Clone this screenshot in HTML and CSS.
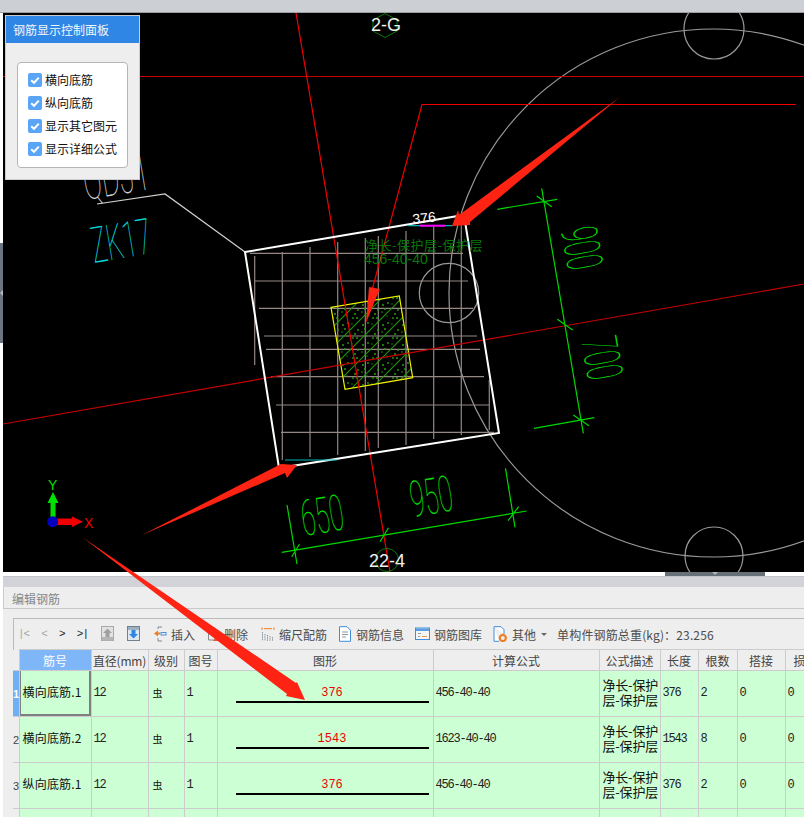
FILE: index.html
```html
<!DOCTYPE html>
<html lang="zh-CN">
<head>
<meta charset="utf-8">
<title>编辑钢筋</title>
<link rel="stylesheet" href="styles.css">
</head>
<body>
<div class="page">
  <div class="topbar"></div>
  <div class="work">
    <div class="side"><div class="side-handle"></div></div>
    <main class="canvas">
      <svg class="cad" width="801" height="559" viewBox="3 13 801 559" xmlns="http://www.w3.org/2000/svg">
        <defs>
          <pattern id="hatch" width="20" height="20" patternUnits="userSpaceOnUse">
            <path class="hatch-line" d="M-2 22L22 -2M-2 2L2 -2M18 22L22 18"/>
            <circle class="hatch-dot" cx="3" cy="5" r="1"/><circle class="hatch-dot" cx="8" cy="3" r=".9"/>
            <circle class="hatch-dot" cx="5" cy="9" r="1"/><circle class="hatch-dot" cx="2" cy="12" r=".8"/>
            <circle class="hatch-dot" cx="15" cy="14" r="1"/><circle class="hatch-dot" cx="18" cy="10" r=".9"/>
            <circle class="hatch-dot" cx="13" cy="18" r=".9"/><circle class="hatch-dot" cx="17" cy="18" r="1"/>
            <circle class="hatch-dot" cx="12" cy="4" r=".7"/><circle class="hatch-dot" cx="7" cy="16" r=".7"/>
          </pattern>
        </defs>
        <g class="l-gray">
          <circle cx="713" cy="293" r="264"/>
          <circle cx="714" cy="29" r="30"/>
          <circle cx="449" cy="293" r="29.7"/>
          <circle cx="714" cy="556" r="29"/>
        </g>
        <path class="l-white-thin" d="M97 204L165 194L245 252"/>
        <path class="l-rebar" d="M250 253.300H463M255 281H468M259 308.300H473M264 336H477M266 349.300H480M271 376.700H484M276 405H489M281 432.300H494"/>
        <path class="l-rebar" d="M254.700 256V365M282.300 252V460M310 247V457M337.700 242V455M365.300 238V451M378.300 236V448M406 231V445M433.700 226V439M461.300 222V435M489.300 380V430"/>
        <polygon class="column-fill" points="331,307.3 399.300,296 412.700,377.700 345,389.300"/>
        <polygon class="column-edge" points="331,307.3 399.300,296 412.700,377.700 345,389.300"/>
        <path class="l-darkred" d="M3 76.500H804M3 424L804 284"/>
        <path class="l-red" d="M796 104.500H422L368 305M296 13L390 572"/>
        <polygon class="outline" points="245,252 464,215 499,433 279,468"/>
        <path class="l-cyan" d="M408 225.700H453M285 460H337"/>
        <path class="l-magenta" d="M420 225.700H445"/>
        <path class="l-green" d="M497.300 209.300L557.300 199.300M541.700 188.300L583.300 433.300M536.700 196L551.700 206.700M557.300 319.300L572.700 330M573.300 415L589 425.700M534 428.300L594.300 417.700"/>
        <path class="l-green" d="M287 505L297 564M281.800 552.300L526.700 511M291.700 556.700L299.500 544M380 541.700L388.500 527.700M508 520.700L518.600 506.700M505.500 468.300L515 527.300"/>
        <polygon class="l-hex" points="385,13.500 397,20 397,31 385,37.500 373,31 373,20"/>
        <circle class="l-hex" cx="387" cy="560" r="11.500"/>
        <text class="t-cad t-green" transform="translate(304,536) rotate(-9.500) scale(.52,1)">650</text>
        <text class="t-cad t-green" transform="translate(413,517) rotate(-9.500) scale(.52,1)">950</text>
        <text class="t-cad t-green" transform="translate(561,230) rotate(80) scale(.52,1)">900</text>
        <text class="t-cad t-green" transform="translate(581,340) rotate(80) scale(.52,1)">700</text>
        <text class="t-cad t-gray" transform="translate(86,200) rotate(-9.500) scale(.55,1)">QDJ1</text>
        <text class="t-cad t-cyan" transform="translate(94,263) rotate(-9.500) scale(.52,1)">ZK17</text>
        <text class="t-label" transform="translate(413,224) rotate(-6)">376</text>
        <text class="t-note" x="365" y="250">净长-保护层-保护层</text>
        <text class="t-note-num" x="364" y="264">456-40-40</text>
        <text class="t-axis-name" x="371" y="31">2-G</text>
        <text class="t-axis-name" x="369" y="567">22-4</text>
        <path class="axis-y" d="M50.500 521V503H47.500L53 492L58.500 503H55.500V521Z"/>
        <path class="axis-x" d="M56 518.500H72V516.500L83 521.800L72 527V525H56Z"/>
        <circle class="axis-o" cx="52.700" cy="521.700" r="5.500"/>
        <text class="t-y" x="48" y="490">Y</text>
        <text class="t-x" x="84" y="528">X</text>
      </svg>
      <aside class="panel">
        <h2 class="panel-title">钢筋显示控制面板</h2>
        <div class="panel-body">
          <ul class="check-list">
            <li class="check-row"><span class="check"><svg viewBox="0 0 14 14"><path d="M3.200 7.200L6 9.800L10.800 4.600"/></svg></span>横向底筋</li>
            <li class="check-row"><span class="check"><svg viewBox="0 0 14 14"><path d="M3.200 7.200L6 9.800L10.800 4.600"/></svg></span>纵向底筋</li>
            <li class="check-row"><span class="check"><svg viewBox="0 0 14 14"><path d="M3.200 7.200L6 9.800L10.800 4.600"/></svg></span>显示其它图元</li>
            <li class="check-row"><span class="check"><svg viewBox="0 0 14 14"><path d="M3.200 7.200L6 9.800L10.800 4.600"/></svg></span>显示详细公式</li>
          </ul>
        </div>
      </aside>
    </main>
  </div>
  <div class="splitter"><div class="split-handle"></div></div>
  <section class="editor">
    <div class="editor-band"></div>
    <h1 class="editor-title">编辑钢筋</h1>
    <div class="editor-inner">
      <div class="toolbar">
        <div class="nav"><span class="off">|&lt;</span><span class="off">&lt;</span><span>&gt;</span><span>&gt;|</span></div>
        <div class="pair">
          <svg class="ico" viewBox="0 0 14 16"><rect x=".5" y=".5" width="12" height="14" fill="#e2e2e2" stroke="#a8a8a8"/><rect x="1" y="11" width="11" height="3.500" fill="#b5b5b5"/><path d="M6.500 2.500L11 7H8.500V11H4.500V7H2Z" fill="#a0a0a0"/></svg>
          <svg class="ico" viewBox="0 0 14 16"><rect x=".5" y=".5" width="12" height="14" fill="#dfe7ef" stroke="#6f8191"/><rect x="1" y="1" width="11" height="3" fill="#9fb0bf"/><path d="M4.500 4H8.500V8H11L6.500 12.500L2 8H4.500Z" fill="#2f86e4"/></svg>
        </div>
        <div class="tool tool-first">
          <svg class="ico" viewBox="0 0 14 16"><path d="M5 3V1H9M5 12V15H9" fill="none" stroke="#7f8a94"/><path d="M1 7.500L5 4.500V6.500H7V8.500H5V10.500Z" fill="#ef7d22"/><rect x="8" y="6.500" width="5" height="2.500" fill="none" stroke="#4a90d9"/></svg>
          <span>插入</span>
        </div>
        <div class="tool">
          <svg class="ico" viewBox="0 0 14 16"><path d="M2.500 2V14H8M2.500 2H9V7" fill="none" stroke="#8a8a8a"/><path d="M7 15L11 9L14 15Z" fill="#e2584a"/></svg>
          <span>删除</span>
        </div>
        <div class="tool tool-gap">
          <svg class="ico" viewBox="0 0 14 16"><path d="M1 1.500V4M13 1.500V4M3 2.700H11" fill="none" stroke="#ef7d22"/><path d="M1.500 6V15M4 8V15M6.500 9V15M9 10V15M11.500 11V15" fill="none" stroke="#8a949e" stroke-dasharray="1.500 .7"/></svg>
          <span>缩尺配筋</span>
        </div>
        <div class="tool">
          <svg class="ico" viewBox="0 0 14 16"><path d="M1.500 .7H9L12.500 4.200V15.300H1.500Z" fill="#fff" stroke="#3f8ddc"/><path d="M4 6H10M4 8.500H10M4 11H8" stroke="#8b96a0"/></svg>
          <span>钢筋信息</span>
        </div>
        <div class="tool">
          <svg class="ico ico-wide" viewBox="0 0 15 16"><rect x=".5" y="2" width="14" height="11.500" fill="#f5f5f5" stroke="#3f8ddc"/><rect x="1" y="2.500" width="13" height="2.500" fill="#5a9fe4"/><path d="M3 7.500H6M3 10.500H5" stroke="#8b96a0"/><path d="M7 10.500H12" stroke="#e8a050"/></svg>
          <span>钢筋图库</span>
        </div>
        <div class="tool tool-last">
          <svg class="ico" viewBox="0 0 14 16"><path d="M1 .7H8L11 3.700V8M6 15.300H1V.7" fill="#fff" stroke="#3f8ddc"/><circle cx="9.800" cy="12" r="3" fill="none" stroke="#ef7d22" stroke-width="2"/><path d="M9.800 7.800V9M9.800 15V16M5.800 12H7M12.700 12H14" stroke="#ef7d22" stroke-width="1.500"/></svg>
          <span>其他</span><i class="caret"></i>
        </div>
        <div class="total">单构件钢筋总重(kg)：23.256</div>
      </div>
      <table class="grid">
        <colgroup>
          <col class="c-idx"><col class="c-name"><col class="c-dia"><col class="c-grade"><col class="c-fig"><col class="c-shape"><col class="c-calc"><col class="c-desc"><col class="c-len"><col class="c-num"><col class="c-lap"><col class="c-loss">
        </colgroup>
        <thead>
          <tr><th></th><th class="th-active">筋号</th><th class="th-tight">直径(mm)</th><th>级别</th><th>图号</th><th>图形</th><th>计算公式</th><th>公式描述</th><th>长度</th><th>根数</th><th>搭接</th><th>损耗(%)</th></tr>
        </thead>
        <tbody>
          <tr>
            <td class="idx idx-on">1</td><td class="name name-on">横向底筋.1</td><td class="mono">12</td><td class="grade">虫</td><td class="mono">1</td>
            <td class="shape"><div class="shape-val">376</div><div class="shape-bar"></div></td>
            <td class="mono">456-40-40</td><td class="desc">净长-保护<br>层-保护层</td><td class="mono">376</td><td class="mono">2</td><td class="mono">0</td><td class="mono">0</td>
          </tr>
          <tr>
            <td class="idx">2</td><td class="name">横向底筋.2</td><td class="mono">12</td><td class="grade">虫</td><td class="mono">1</td>
            <td class="shape"><div class="shape-val">1543</div><div class="shape-bar"></div></td>
            <td class="mono">1623-40-40</td><td class="desc">净长-保护<br>层-保护层</td><td class="mono">1543</td><td class="mono">8</td><td class="mono">0</td><td class="mono">0</td>
          </tr>
          <tr>
            <td class="idx">3</td><td class="name">纵向底筋.1</td><td class="mono">12</td><td class="grade">虫</td><td class="mono">1</td>
            <td class="shape"><div class="shape-val">376</div><div class="shape-bar"></div></td>
            <td class="mono">456-40-40</td><td class="desc">净长-保护<br>层-保护层</td><td class="mono">376</td><td class="mono">2</td><td class="mono">0</td><td class="mono">0</td>
          </tr>
          <tr>
            <td class="idx"></td><td class="name"></td><td></td><td></td><td></td><td></td><td></td><td></td><td></td><td></td><td></td><td></td>
          </tr>
        </tbody>
      </table>
    </div>
  </section>
  <svg class="marks" width="804" height="817" viewBox="0 0 804 817" xmlns="http://www.w3.org/2000/svg">
    <polygon points="620,97 470,222 470,225 452,226 458,210 459,215"/>
    <polygon points="142,535 281,464 297,465 287,478 285,473"/>
    <polygon points="369,287 380,289 376,298 366,323"/>
    <polygon points="82,537 296,683 297,682 305,700 286,696 287,694"/>
  </svg>
</div>
</body>
</html>
```
FILE: styles.css
```css
* { box-sizing: border-box; }
html, body { margin: 0; padding: 0; background: #fff; overflow: hidden; }
.page {
  position: relative;
  width: 804px;
  height: 817px;
  overflow: hidden;
  display: flex;
  flex-direction: column;
  font-family: "Noto Sans CJK SC", "Liberation Sans", sans-serif;
}
.topbar { height: 13px; flex: none; background: #ccd0d5; border-bottom: 1px solid #9a9da2; }
.work { display: flex; height: 559px; flex: none; }
.side { width: 3px; flex: none; background: #fff; padding-top: 230px; }
.side-handle { height: 100px; display: flex; align-items: center; background: #6b7480; }
.side-handle::after { content: ""; width: 0; height: 0; border: 3px solid transparent; border-left: 0; border-right-color: #b4b8bd; }
.canvas { position: relative; flex: 1; background: #000; overflow: hidden; }
.cad { display: block; }

.l-gray { fill: none; stroke: #9a9a9a; stroke-width: 1.2; }
.l-white-thin { fill: none; stroke: #d0d0d0; stroke-width: 1.2; }
.l-darkred { fill: none; stroke: #c80000; stroke-width: 1.2; }
.l-red { fill: none; stroke: #f00000; stroke-width: 1.2; }
.l-rebar { fill: none; stroke: #948784; stroke-width: 1.2; }
.l-cyan { fill: none; stroke: #00b4b4; stroke-width: 1.2; }
.l-magenta { fill: none; stroke: #ff00ff; stroke-width: 2; }
.l-green { fill: none; stroke: #00d800; stroke-width: 1.2; }
.l-hex { fill: none; stroke: #0a7a0a; stroke-width: 1; }
.outline { fill: none; stroke: #fff; stroke-width: 2; }
.column-fill { fill: url(#hatch); }
.column-edge { fill: none; stroke: #f0f000; stroke-width: 1.2; }
.hatch-line { stroke: #1e960a; stroke-width: 1.1; fill: none; }
.hatch-dot { fill: #22a00e; }

.t-cad { font-family: Roboto, "Liberation Sans", sans-serif; font-weight: 100; font-size: 50px; }
.t-green { fill: #00e000; }
.t-gray { fill: #d0d0d0; }
.t-cyan { fill: #00dcdc; }
.t-label { fill: #fff; font-family: "Liberation Sans", sans-serif; font-size: 14px; }
.t-note { fill: #0a780a; font-family: "Noto Sans CJK SC", sans-serif; font-size: 13px; letter-spacing: .5px; }
.t-note-num { fill: #0a780a; font-family: "Liberation Sans", sans-serif; font-size: 14px; }
.t-axis-name { fill: #f0f0f0; font-family: "Liberation Sans", sans-serif; font-size: 18px; }
.axis-y { fill: #00e000; }
.axis-x { fill: #f00000; }
.axis-o { fill: #0000c0; }
.t-y { fill: #00e000; font-family: "Liberation Sans", sans-serif; font-size: 14px; }
.t-x { fill: #f00000; font-family: "Liberation Sans", sans-serif; font-size: 14px; }

.panel {
  position: absolute;
  left: 2px;
  top: 2px;
  width: 135px;
  height: 165px;
  background: #eee;
  border: 1px solid #ccc;
  display: flex;
  flex-direction: column;
}
.panel-title {
  margin: 0;
  height: 27px;
  flex: none;
  background: #2f86e4;
  color: #f2f7fd;
  font-size: 12px;
  font-weight: 400;
  line-height: 27px;
  padding-left: 7px;
}
.panel-body { padding: 19px 12px 11px 11px; flex: 1; }
.check-list {
  list-style: none;
  margin: 0;
  height: 106px;
  width: 111px;
  padding: 5px 0 0 10px;
  background: #fff;
  border: 1px solid #b5b5b5;
  border-radius: 4px;
}
.check-row { display: flex; align-items: center; gap: 3px; height: 23px; font-size: 12px; color: #111; white-space: nowrap; }
.check { width: 14px; height: 14px; flex: none; background: #5aa5f5; border-radius: 2px; }
.check svg { display: block; width: 14px; height: 14px; fill: none; stroke: #fff; stroke-width: 2; }

.splitter { height: 4px; flex: none; background: #fff; padding-left: 665px; }
.split-handle { width: 100px; height: 4px; display: flex; justify-content: center; background: #667079; }
.split-handle::after { content: ""; width: 0; height: 0; border: 3px solid transparent; border-bottom: 0; border-top-color: #b4b8bd; }

.editor { flex: 1; min-height: 0; margin-left: 3px; background: #eee; display: flex; flex-direction: column; overflow: hidden; }
.editor-band { height: 11px; flex: none; background: #d2d3d8; border-top: 1px solid #c4c5ca; }
.editor-title {
  margin: 0;
  height: 22px;
  flex: none;
  padding-left: 8px;
  font-size: 12px;
  font-weight: 400;
  line-height: 23px;
  color: #85878a;
  border-left: 1px solid #ccc;
  border-bottom: 1px solid #c8c8c8;
}
.editor-inner { margin: 9px 0 0 10px; box-shadow: inset 1px 0 #bbb; border-top: 1px solid #bbb; flex: 1; overflow: hidden; }

.toolbar { height: 30px; display: flex; align-items: center; gap: 11px; padding-left: 5px; font-size: 12px; color: #4c4c4c; white-space: nowrap; }
.nav { width: 70px; display: flex; justify-content: space-between; font-family: "Liberation Mono", monospace; font-size: 11px; color: #222; letter-spacing: -1px; }
.nav .off { color: #a5a5a5; }
.pair { display: flex; gap: 12px; margin-left: 2px; }
.ico { display: block; width: 14px; height: 16px; flex: none; }
.ico-wide { width: 15px; }
.tool { display: flex; align-items: center; gap: 4px; }
.tool-first { margin-left: 1px; }
.tool-gap { margin-left: 2px; }
.tool-last { gap: 5px; }
.caret { width: 0; height: 0; margin-left: 0; border: 3px solid transparent; border-top-color: #666; border-bottom: 0; }
.total { margin-left: -1px; color: #4c4c4c; letter-spacing: .15px; }

.grid { table-layout: fixed; border-collapse: collapse; width: 832px; font-size: 13px; }
.c-idx { width: 6px; }
.c-name { width: 72px; }
.c-dia { width: 57px; }
.c-grade { width: 36px; }
.c-fig { width: 33px; }
.c-shape { width: 216px; }
.c-calc { width: 166px; }
.c-desc { width: 61px; }
.c-len { width: 38px; }
.c-num { width: 39px; }
.c-lap { width: 48px; }
.c-loss { width: 60px; }
.grid th {
  height: 21px;
  padding: 0;
  background: #eee;
  border: 1px solid #ccc;
  color: #444;
  font-size: 12px;
  font-weight: 400;
  line-height: 19px;
  overflow: hidden;
  white-space: nowrap;
}
.grid th:first-child { border-left: 0; border-top: 0; }
.grid th.th-active { background: #7eb6f8; color: #fff; }
.grid th.th-tight { font-size: 12px; letter-spacing: -.2px; }
.grid td {
  height: 46px;
  padding: 0 0 4px 2px;
  background: #ccffd4;
  border: 1px solid #ccc;
  color: #222;
  overflow: hidden;
  white-space: nowrap;
  vertical-align: middle;
}
.grid td.idx { padding: 0; background: #eee; border-left: 0; color: #444; font-family: "Liberation Sans", sans-serif; font-size: 11px; }
.grid td.idx-on { background: #6fb0f5; color: #fff; font-weight: 700; }
.grid td.name { padding-left: 3px; font-size: 12px; letter-spacing: .2px; color: #111; }
.grid td.name-on { box-shadow: inset 1px 0 #808080, inset -2px -2px #808080; }
.grid td.mono { padding-bottom: 1px; font-family: "Liberation Mono", monospace; font-size: 12px; letter-spacing: -1.2px; color: #222; }
.grid td.grade { padding: 0 0 2px 4px; font-size: 10px; color: #111; }
.grid td.desc { padding: 0 0 4px 3px; font-size: 13px; line-height: 15px; color: #111; letter-spacing: -.2px; }
.grid td.shape { padding: 14px 4px 0 18px; vertical-align: top; }
.shape-val { height: 17px; text-align: center; font-family: "Liberation Mono", monospace; font-size: 12px; line-height: 17px; color: #f00000; }
.shape-bar { height: 2px; margin-top: -1px; background: #000; }

.marks { position: absolute; left: 0; top: 0; pointer-events: none; }
.marks polygon { fill: #fe2312; }
```
